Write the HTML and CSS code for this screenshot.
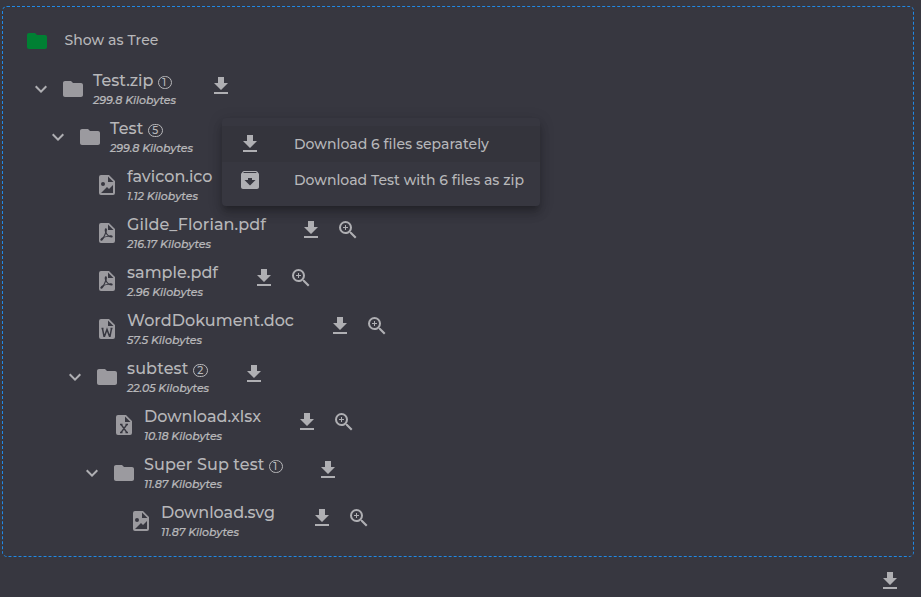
FILE: index.html
```html
<!DOCTYPE html>
<html lang="en">
<head>
<meta charset="utf-8">
<title>Files</title>
<link rel="stylesheet" href="styles.css">
</head>
<body>
<svg class="defs" width="0" height="0">
  <symbol id="download" viewBox="0 0 24 24"><path d="M5 20h14v-2H5v2zM19 9h-4V3H9v6H5l7 7 7-7z"/></symbol>
  <symbol id="zoom" viewBox="0 0 24 24"><path d="M15.5 14h-.79l-.28-.27A6.47 6.47 0 0 0 16 9.5 6.5 6.5 0 1 0 9.5 16c1.61 0 3.09-.59 4.23-1.57l.27.28v.79l5 4.99L20.49 19l-4.99-5zm-6 0C7.01 14 5 11.99 5 9.5S7.01 5 9.5 5 14 7.01 14 9.5 11.99 14 9.5 14zM12 10h-2v2H9v-2H7V9h2V7h1v2h2v1z"/></symbol>
  <symbol id="folder" viewBox="0 0 24 24"><path d="M10 4H4c-1.1 0-2 .9-2 2v12c0 1.1.9 2 2 2h16c1.1 0 2-.9 2-2V8c0-1.1-.9-2-2-2h-8l-2-2z"/></symbol>
  <symbol id="chevron" viewBox="0 0 24 24"><path d="M7.41 8.59L12 13.17l4.59-4.58L18 10l-6 6-6-6 1.41-1.41z"/></symbol>
  <symbol id="archive" viewBox="0 0 24 24"><path d="M20.54 5.23l-1.39-1.68C18.88 3.21 18.47 3 18 3H6c-.47 0-.88.21-1.16.55L3.46 5.23C3.17 5.57 3 6.02 3 6.5V19c0 1.1.9 2 2 2h14c1.1 0 2-.9 2-2V6.5c0-.48-.17-.93-.46-1.27zM12 17.5L6.5 12H10v-2h4v2h3.5L12 17.5zM5.12 5l.81-1h12l.94 1H5.12z"/></symbol>
  <symbol id="image" viewBox="0 0 24 24"><path fill-rule="evenodd" d="M14 2l6 6v12a2 2 0 0 1-2 2H6a2 2 0 0 1-2-2V4a2 2 0 0 1 2-2h8zm4 18v-8l-4 4-2-2-6 6h12zM8 9a2 2 0 1 0 0 4 2 2 0 0 0 0-4zm5-5.5V9h5.5L13 3.5z"/></symbol>
  <symbol id="pdf" viewBox="0 0 24 24"><path d="M14 9h5.5L14 3.5V9M7 2h8l6 6v12a2 2 0 0 1-2 2H7a2 2 0 0 1-2-2V4a2 2 0 0 1 2-2m4.93 10.44c.41.9.93 1.64 1.53 2.15l.41.32c-.87.16-2.07.44-3.34.93l-.11.04.5-1.04c.45-.87.78-1.66 1.01-2.4m6.48 3.81c.18-.18.27-.41.28-.66.03-.2-.02-.39-.12-.55-.29-.47-1.04-.69-2.28-.69l-1.29.07-.87-.58c-.63-.52-1.2-1.43-1.6-2.56l.04-.14c.33-1.33.64-2.94-.02-3.6a.853.853 0 0 0-.61-.24h-.24c-.37 0-.7.39-.79.77-.37 1.33-.15 2.06.22 3.27v.01c-.25.88-.57 1.9-1.08 2.93l-.96 1.8-.89.49c-1.2.75-1.77 1.59-1.88 2.12-.04.19-.02.36.05.54l.03.05.48.31.44.11c.81 0 1.73-.95 2.97-3.07l.18-.07c1.03-.33 2.31-.56 4.03-.75 1.03.51 2.24.74 3 .74.44 0 .74-.11.91-.3z" transform="translate(-1 0)" fill-rule="evenodd"/></symbol>
  <symbol id="word" viewBox="0 0 24 24"><path fill-rule="evenodd" d="M6 2h8l6 6v12a2 2 0 0 1-2 2H6a2 2 0 0 1-2-2V4a2 2 0 0 1 2-2m7 1.500V9h5.500L13 3.500"/><path class="cut" d="M6.500 11.600h2M15.500 11.600h2M7.500 11.600l1.500 7.700h.5L12 12.500l2.500 6.800h.5l1.500-7.700"/></symbol>
  <symbol id="excel" viewBox="0 0 24 24"><path fill-rule="evenodd" d="M6 2h8l6 6v12a2 2 0 0 1-2 2H6a2 2 0 0 1-2-2V4a2 2 0 0 1 2-2m7 1.500V9h5.500L13 3.500"/><path class="cut" d="M8 11.600h2.500M13.500 11.600H16M8 19.400h2.500M13.500 19.400H16M9.200 11.600l5.600 7.800M14.800 11.600l-5.600 7.800"/></symbol>
</svg>

<main class="dropzone">
  <div class="toggle">
    <svg class="icon green"><use href="#folder"/></svg>
    <span class="toggle-label" data-width="94">Show as Tree</span>
  </div>
  <div class="tree" id="tree"></div>
</main>
<footer class="footer"><svg class="icon"><use href="#download"/></svg></footer>

<div class="menu">
  <div class="menu-item active"><svg class="icon"><use href="#download"/></svg><span class="menu-label" data-width="195">Download 6 files separately</span></div>
  <div class="menu-item"><svg class="icon"><use href="#archive"/></svg><span class="menu-label" data-width="230">Download Test with 6 files as zip</span></div>
</div>
<script src="tree.js"></script>
</body>
</html>
```

FILE: styles.css
```css
* { box-sizing: border-box; }
body {
  margin: 0;
  height: 597px;
  overflow: hidden;
  padding: 6px 7px 0 2px;
  background: #373740;
  color: #b7b7ba;
  font-family: Montserrat, Inter, "Open Sans", sans-serif;
  font-weight: 500;
}
.defs { display: block; }
.cut { fill: none; stroke: #373740; stroke-width: 1.500px; }
.icon { display: block; flex: none; width: 24px; height: 24px; fill: #afafb3; }
.icon.green { fill: #008033; }
.icon.muted { fill: #9b9a9f; }
.dropzone {
  height: 551px;
  border: 1px dashed #2089e5;
  border-radius: 5px;
}
.toggle { display: flex; align-items: center; gap: 15.500px; height: 58px; padding: 10px 0 0 22px; }
.toggle-label { font-size: 14px; line-height: 20px; margin-top: -2px; }
.node { display: flex; align-items: center; height: 48px; padding-left: calc(26px + var(--depth) * 17px); }
.expander { width: 24px; height: 24px; margin-right: 8px; }
.text { width: var(--label); margin-left: 8px; height: 40px; white-space: nowrap; }
.title { display: flex; align-items: center; height: 22px; margin-top: 1px; font-size: 16px; line-height: 22px; }
.size { display: block; width: max-content; font-size: 11px; line-height: 14px; font-style: italic; font-weight: 500; margin-top: 1px; -webkit-text-stroke: .2px #b7b7ba; }
.badge {
  height: 13px;
  min-width: 14px;
  margin: 3px 0 0 4px;
  padding: 0 3.800px;
  border: 1px solid #b7b7ba;
  border-radius: 7px;
  font-size: 10.5px;
  font-weight: 500;
  line-height: 11px;
}
.actions { display: flex; gap: 12.500px; margin-top: -6px; }
.footer { display: flex; justify-content: flex-end; padding: 12px 12px 0 0; }
.menu {
  position: absolute;
  left: 222px;
  top: 118px;
  width: 318px;
  height: 88px;
  padding: 8px 0;
  border-radius: 4px;
  background: #373740;
  box-shadow: 0 5px 5px -3px rgba(0,0,0,.2), 0 8px 10px 1px rgba(0,0,0,.14), 0 3px 14px 2px rgba(0,0,0,.12);
}
.menu-item { display: flex; align-items: center; gap: 32px; height: 36px; padding-left: 16px; white-space: nowrap; }
.menu-item.active { background: #34343c; }
.menu-label { font-size: 14px; line-height: 20px; }
```

FILE: tree.js
```js
// depth, icon, name, name width, size, size width, badge, label column width, actions
const nodes = [
  [0, "folder", "Test.zip", 60.5, "299.8 Kilobytes", 83, 1, 116, ["download"]],
  [1, "folder", "Test", 33.5, "299.8 Kilobytes", 83, 5, 116, []],
  [2, "image", "favicon.ico", 85.5, "1.12 Kilobytes", 71, 0, 116, []],
  [2, "pdf", "Gilde_Florian.pdf", 139, "216.17 Kilobytes", 84, 0, 172, ["download", "zoom"]],
  [2, "pdf", "sample.pdf", 91, "2.96 Kilobytes", 76, 0, 125, ["download", "zoom"]],
  [2, "word", "WordDokument.doc", 167, "57.5 Kilobytes", 75, 0, 201, ["download", "zoom"]],
  [2, "folder", "subtest", 61.5, "22.05 Kilobytes", 82, 2, 115, ["download"]],
  [3, "excel", "Download.xlsx", 117, "10.18 Kilobytes", 78, 0, 151, ["download", "zoom"]],
  [3, "folder", "Super Sup test", 120.5, "11.87 Kilobytes", 78, 1, 172, ["download"]],
  [4, "image", "Download.svg", 114, "11.87 Kilobytes", 78, 0, 149, ["download", "zoom"]]
];

const icon = (name, cls = "") => `<svg class="icon ${cls}"><use href="#${name}"/></svg>`;

document.getElementById("tree").innerHTML = nodes.map(([depth, type, name, nameW, size, sizeW, count, label, actions]) => `
  <div class="node" style="--depth:${depth};--label:${label}px">
    <div class="expander">${type === "folder" ? icon("chevron") : ""}</div>
    ${icon(type, "muted")}
    <div class="text">
      <div class="title"><span data-width="${nameW}">${name}</span>${count ? `<span class="badge">${count}</span>` : ""}</div>
      <span class="size" data-width="${sizeW}">${size}</span>
    </div>
    <div class="actions">${actions.map(a => icon(a)).join("")}</div>
  </div>`).join("");

// Spread the letters so that each label fills its width.
document.querySelectorAll("[data-width]").forEach(el => {
  const spare = Number(el.dataset.width) - el.getBoundingClientRect().width;
  el.style.letterSpacing = spare / el.textContent.length + "px";
});
```
